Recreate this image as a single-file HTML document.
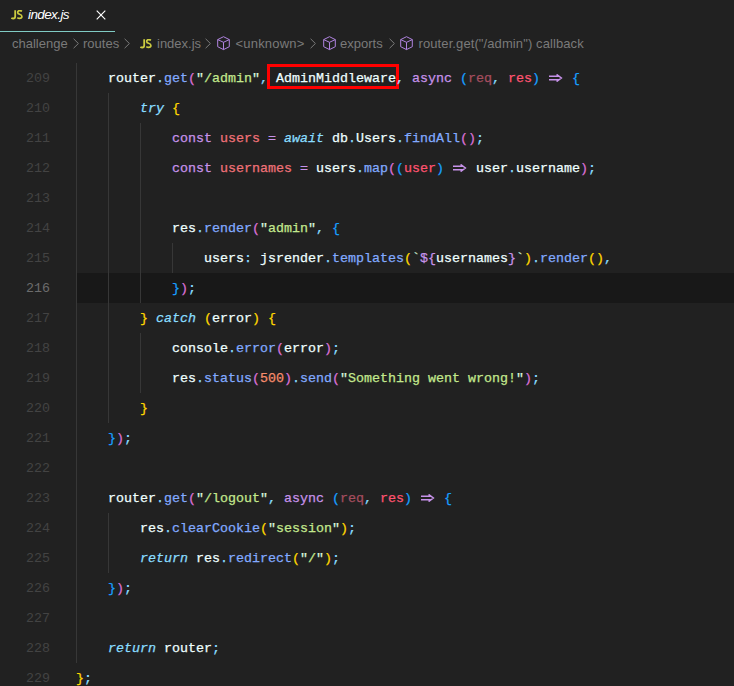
<!DOCTYPE html>
<html><head><meta charset="utf-8"><style>
html,body{margin:0;padding:0;}
body{width:734px;height:686px;overflow:hidden;background:#212121;position:relative;font-family:"Liberation Sans",sans-serif;}
.tabbar{position:absolute;left:0;top:0;width:734px;height:32px;background:#212121;}
.tab{position:absolute;left:0;top:0;width:115px;height:32px;}
.tab .ul{position:absolute;left:0;top:31px;width:115px;height:1px;background:#80cbc4;}
.jsi{position:absolute;font-family:"Liberation Sans",sans-serif;font-weight:bold;color:#cbcb41;letter-spacing:-1.5px;-webkit-text-stroke:0.3px #cbcb41;line-height:1;}
.tabname{position:absolute;left:28px;top:6px;font-size:13.5px;letter-spacing:-0.6px;color:#ffffff;font-style:italic;line-height:18px;}
.crumbs{position:absolute;top:35px;height:18px;line-height:18px;font-size:13px;color:#7a7a7a;white-space:nowrap;}
.code{position:absolute;left:0;top:0;width:734px;height:686px;font-family:"Liberation Mono",monospace;font-size:13.333px;-webkit-text-stroke:0.25px currentColor;}
.ln{position:absolute;left:0;width:50px;-webkit-text-stroke:0;text-align:right;color:#434343;height:30px;line-height:30px;}
.ln.cur{color:#6c6c6c;}
.l{position:absolute;left:76px;height:30px;line-height:30px;white-space:pre;color:#eeffff;}
.g{position:absolute;width:1px;background:#373737;}
.hl{position:absolute;left:76px;width:658px;height:30px;background:#181818;}
.t{color:#eeffff}.k{color:#c792ea}.v{color:#f07178}.vf{color:#a44d5e}.pa{color:#ff5370}.i{color:#89ddff;font-style:italic}
.f{color:#82aaff}.p{color:#89ddff}.s{color:#c3e88d}.q{color:#d9f5dd}.n{color:#f78c6c}
.b1{color:#ffd700}.b2{color:#da70d6}.b3{color:#179fff}
.ar{display:inline-block;width:16px;height:30px;position:relative;vertical-align:top;}
.ar svg{position:absolute;left:0;top:10px;}
.box{position:absolute;left:267.2px;top:63.5px;width:126px;height:19.5px;border:3.5px solid #ff0000;}
</style></head><body>

<div class="tabbar"><div class="tab">
<svg style="position:absolute;left:10.5px;top:9.5px" width="12" height="10" viewBox="0 0 12 10"><path d="M4.2 0.2V6.2Q4.2 8.5 2.2 8.5Q1.1 8.5 0.4 7.9" fill="none" stroke="#cbcb41" stroke-width="1.8"/><path d="M10.9 1.3Q10 0.6 8.8 0.6Q6.7 0.6 6.7 2.4Q6.7 3.7 8.6 4.3Q10.9 5 10.9 6.5Q10.9 8.4 8.6 8.4Q7.2 8.4 6.3 7.6" fill="none" stroke="#cbcb41" stroke-width="1.7"/></svg>
<div class="tabname">index.js</div>
<svg style="position:absolute;left:96px;top:10px" width="10" height="10" viewBox="0 0 10 10"><path d="M0.7 0.7L9.3 9.3M9.3 0.7L0.7 9.3" stroke="#ffffff" stroke-width="1.15"/></svg>
<div class="ul"></div></div></div>
<div class="crumbs" style="left:12px">challenge</div>
<svg style="position:absolute;left:73px;top:37.5px" width="7" height="11" viewBox="0 0 7 11"><path d="M0.6 0.8L5.4 5.5L0.6 10.2" fill="none" stroke="#7a7a7a" stroke-width="1"/></svg>
<div class="crumbs" style="left:83px">routes</div>
<svg style="position:absolute;left:124px;top:37.5px" width="7" height="11" viewBox="0 0 7 11"><path d="M0.6 0.8L5.4 5.5L0.6 10.2" fill="none" stroke="#7a7a7a" stroke-width="1"/></svg>
<svg style="position:absolute;left:139.5px;top:38.6px" width="12" height="10" viewBox="0 0 12 10"><path d="M4.2 0.2V6.2Q4.2 8.5 2.2 8.5Q1.1 8.5 0.4 7.9" fill="none" stroke="#cbcb41" stroke-width="1.8"/><path d="M10.9 1.3Q10 0.6 8.8 0.6Q6.7 0.6 6.7 2.4Q6.7 3.7 8.6 4.3Q10.9 5 10.9 6.5Q10.9 8.4 8.6 8.4Q7.2 8.4 6.3 7.6" fill="none" stroke="#cbcb41" stroke-width="1.7"/></svg>
<div class="crumbs" style="left:157px">index.js</div>
<svg style="position:absolute;left:205px;top:37.5px" width="7" height="11" viewBox="0 0 7 11"><path d="M0.6 0.8L5.4 5.5L0.6 10.2" fill="none" stroke="#7a7a7a" stroke-width="1"/></svg>
<svg style="position:absolute;left:217px;top:36px" width="13" height="15" viewBox="0 0 13 15"><path d="M6.5 0.7L12.3 3.6V10.7L6.5 13.6L0.7 10.7V3.6Z M0.7 3.6L6.5 6.3L12.3 3.6 M6.5 6.3V13.6" fill="none" stroke="#b084e0" stroke-width="1" stroke-linejoin="round"/></svg>
<div class="crumbs" style="left:235.5px;letter-spacing:0.2px">&lt;unknown&gt;</div>
<svg style="position:absolute;left:310px;top:37.5px" width="7" height="11" viewBox="0 0 7 11"><path d="M0.6 0.8L5.4 5.5L0.6 10.2" fill="none" stroke="#7a7a7a" stroke-width="1"/></svg>
<svg style="position:absolute;left:323px;top:36px" width="13" height="15" viewBox="0 0 13 15"><path d="M6.5 0.7L12.3 3.6V10.7L6.5 13.6L0.7 10.7V3.6Z M0.7 3.6L6.5 6.3L12.3 3.6 M6.5 6.3V13.6" fill="none" stroke="#b084e0" stroke-width="1" stroke-linejoin="round"/></svg>
<div class="crumbs" style="left:340px">exports</div>
<svg style="position:absolute;left:389px;top:37.5px" width="7" height="11" viewBox="0 0 7 11"><path d="M0.6 0.8L5.4 5.5L0.6 10.2" fill="none" stroke="#7a7a7a" stroke-width="1"/></svg>
<svg style="position:absolute;left:400px;top:36px" width="13" height="15" viewBox="0 0 13 15"><path d="M6.5 0.7L12.3 3.6V10.7L6.5 13.6L0.7 10.7V3.6Z M0.7 3.6L6.5 6.3L12.3 3.6 M6.5 6.3V13.6" fill="none" stroke="#b084e0" stroke-width="1" stroke-linejoin="round"/></svg>
<div class="crumbs" style="left:418.5px;letter-spacing:0.1px">router.get("/admin") callback</div>
<div class="box"></div>
<div class="code">
<div class="hl" style="top:273px"></div>
<div class="g" style="left:76px;top:63px;height:600px"></div>
<div class="g" style="left:108px;top:93px;height:330px"></div>
<div class="g" style="left:140px;top:123px;height:180px"></div>
<div class="g" style="left:172px;top:243px;height:30px"></div>
<div class="g" style="left:140px;top:333px;height:60px"></div>
<div class="g" style="left:108px;top:513px;height:60px"></div>
<div class="ln" style="top:64px">209</div>
<div class="l" style="top:64px">    <span class="t">router</span><span class="p">.</span><span class="f">get</span><span class="b2">(</span><span class="q">"</span><span class="s">/admin</span><span class="q">"</span><span class="p">,</span> <span class="t">AdminMiddleware</span><span class="p">,</span> <span class="k">async</span> <span class="b3">(</span><span class="vf">req</span><span class="p">,</span> <span class="pa">res</span><span class="b3">)</span> <span class="ar"><svg width="16" height="8" viewBox="0 0 16 8"><path d="M1 2.3H11.5M1 5.7H11.5M8.6 0.4L13.4 4L8.6 7.6" fill="none" stroke="#c792ea" stroke-width="1.45"/></svg></span> <span class="b3">{</span></div>
<div class="ln" style="top:94px">210</div>
<div class="l" style="top:94px">        <span class="i">try</span> <span class="b1">{</span></div>
<div class="ln" style="top:124px">211</div>
<div class="l" style="top:124px">            <span class="k">const</span> <span class="v">users</span> <span class="k">=</span> <span class="i">await</span> <span class="t">db</span><span class="p">.</span><span class="t">Users</span><span class="p">.</span><span class="f">findAll</span><span class="b2">()</span><span class="p">;</span></div>
<div class="ln" style="top:154px">212</div>
<div class="l" style="top:154px">            <span class="k">const</span> <span class="v">usernames</span> <span class="k">=</span> <span class="t">users</span><span class="p">.</span><span class="f">map</span><span class="b2">(</span><span class="b3">(</span><span class="pa">user</span><span class="b3">)</span> <span class="ar"><svg width="16" height="8" viewBox="0 0 16 8"><path d="M1 2.3H11.5M1 5.7H11.5M8.6 0.4L13.4 4L8.6 7.6" fill="none" stroke="#c792ea" stroke-width="1.45"/></svg></span> <span class="t">user</span><span class="p">.</span><span class="t">username</span><span class="b2">)</span><span class="p">;</span></div>
<div class="ln" style="top:184px">213</div>
<div class="l" style="top:184px"></div>
<div class="ln" style="top:214px">214</div>
<div class="l" style="top:214px">            <span class="t">res</span><span class="p">.</span><span class="f">render</span><span class="b2">(</span><span class="q">"</span><span class="s">admin</span><span class="q">"</span><span class="p">,</span> <span class="b3">{</span></div>
<div class="ln" style="top:244px">215</div>
<div class="l" style="top:244px">                <span class="t">users</span><span class="p">:</span> <span class="t">jsrender</span><span class="p">.</span><span class="f">templates</span><span class="b1">(</span><span class="q">`</span><span class="k">${</span><span class="t">usernames</span><span class="k">}</span><span class="q">`</span><span class="b1">)</span><span class="p">.</span><span class="f">render</span><span class="b1">()</span><span class="p">,</span></div>
<div class="ln cur" style="top:274px">216</div>
<div class="l" style="top:274px">            <span class="b3">}</span><span class="b2">)</span><span class="p">;</span></div>
<div class="ln" style="top:304px">217</div>
<div class="l" style="top:304px">        <span class="b1">}</span> <span class="i">catch</span> <span class="b1">(</span><span class="t">error</span><span class="b1">)</span> <span class="b1">{</span></div>
<div class="ln" style="top:334px">218</div>
<div class="l" style="top:334px">            <span class="t">console</span><span class="p">.</span><span class="f">error</span><span class="b2">(</span><span class="t">error</span><span class="b2">)</span><span class="p">;</span></div>
<div class="ln" style="top:364px">219</div>
<div class="l" style="top:364px">            <span class="t">res</span><span class="p">.</span><span class="f">status</span><span class="b2">(</span><span class="n">500</span><span class="b2">)</span><span class="p">.</span><span class="f">send</span><span class="b2">(</span><span class="q">"</span><span class="s">Something went wrong!</span><span class="q">"</span><span class="b2">)</span><span class="p">;</span></div>
<div class="ln" style="top:394px">220</div>
<div class="l" style="top:394px">        <span class="b1">}</span></div>
<div class="ln" style="top:424px">221</div>
<div class="l" style="top:424px">    <span class="b3">}</span><span class="b2">)</span><span class="p">;</span></div>
<div class="ln" style="top:454px">222</div>
<div class="l" style="top:454px"></div>
<div class="ln" style="top:484px">223</div>
<div class="l" style="top:484px">    <span class="t">router</span><span class="p">.</span><span class="f">get</span><span class="b2">(</span><span class="q">"</span><span class="s">/logout</span><span class="q">"</span><span class="p">,</span> <span class="k">async</span> <span class="b3">(</span><span class="vf">req</span><span class="p">,</span> <span class="pa">res</span><span class="b3">)</span> <span class="ar"><svg width="16" height="8" viewBox="0 0 16 8"><path d="M1 2.3H11.5M1 5.7H11.5M8.6 0.4L13.4 4L8.6 7.6" fill="none" stroke="#c792ea" stroke-width="1.45"/></svg></span> <span class="b3">{</span></div>
<div class="ln" style="top:514px">224</div>
<div class="l" style="top:514px">        <span class="t">res</span><span class="p">.</span><span class="f">clearCookie</span><span class="b1">(</span><span class="q">"</span><span class="s">session</span><span class="q">"</span><span class="b1">)</span><span class="p">;</span></div>
<div class="ln" style="top:544px">225</div>
<div class="l" style="top:544px">        <span class="i">return</span> <span class="t">res</span><span class="p">.</span><span class="f">redirect</span><span class="b1">(</span><span class="q">"</span><span class="s">/</span><span class="q">"</span><span class="b1">)</span><span class="p">;</span></div>
<div class="ln" style="top:574px">226</div>
<div class="l" style="top:574px">    <span class="b3">}</span><span class="b2">)</span><span class="p">;</span></div>
<div class="ln" style="top:604px">227</div>
<div class="l" style="top:604px"></div>
<div class="ln" style="top:634px">228</div>
<div class="l" style="top:634px">    <span class="i">return</span> <span class="t">router</span><span class="p">;</span></div>
<div class="ln" style="top:664px">229</div>
<div class="l" style="top:664px"><span class="b1">}</span><span class="p">;</span></div>
</div>
</body></html>
